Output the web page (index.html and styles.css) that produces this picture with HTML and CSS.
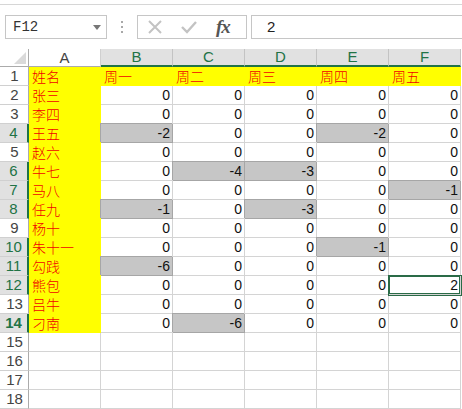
FILE: index.html
```html
<!DOCTYPE html>
<html lang="zh">
<head>
<meta charset="utf-8">
<title>Sheet</title>
<link rel="stylesheet" href="styles.css">
</head>
<body>
<div class="app">
  <div class="topline"></div>
  <div class="fbar">
    <div class="namebox"><span class="ref">F12</span><span class="drop"></span></div>
    <div class="dots"><i></i><i></i><i></i></div>
    <div class="btns">
      <svg class="ico x" width="16" height="16" viewBox="0 0 16 16"><path d="M2 2L14 14M14 2L2 14" stroke="#c3c3c3" stroke-width="2" fill="none"/></svg>
      <svg class="ico v" width="18" height="16" viewBox="0 0 18 16"><path d="M2 8L7 13L16 3" stroke="#c3c3c3" stroke-width="2.4" fill="none"/></svg>
      <span class="fx">fx</span>
    </div>
    <div class="finput">2</div>
  </div>
  <div class="sheet">
    <div class="corner"><span class="tri"></span></div>
    <div class="ch">A</div><div class="ch hl">B</div><div class="ch hl">C</div><div class="ch hl">D</div><div class="ch hl">E</div><div class="ch hl">F</div>

    <div class="rh">1</div><div class="c y t">姓名</div><div class="c y t">周一</div><div class="c y t">周二</div><div class="c y t">周三</div><div class="c y t">周四</div><div class="c y t">周五</div>
    <div class="rh">2</div><div class="c y t">张三</div><div class="c n">0</div><div class="c n">0</div><div class="c n">0</div><div class="c n">0</div><div class="c n">0</div>
    <div class="rh">3</div><div class="c y t">李四</div><div class="c n">0</div><div class="c n">0</div><div class="c n">0</div><div class="c n">0</div><div class="c n">0</div>
    <div class="rh hl">4</div><div class="c y t">王五</div><div class="c n g">-2</div><div class="c n">0</div><div class="c n">0</div><div class="c n g">-2</div><div class="c n">0</div>
    <div class="rh">5</div><div class="c y t">赵六</div><div class="c n">0</div><div class="c n">0</div><div class="c n">0</div><div class="c n">0</div><div class="c n">0</div>
    <div class="rh hl">6</div><div class="c y t">牛七</div><div class="c n">0</div><div class="c n g">-4</div><div class="c n g">-3</div><div class="c n">0</div><div class="c n">0</div>
    <div class="rh hl">7</div><div class="c y t">马八</div><div class="c n">0</div><div class="c n">0</div><div class="c n">0</div><div class="c n">0</div><div class="c n g">-1</div>
    <div class="rh hl">8</div><div class="c y t">任九</div><div class="c n g">-1</div><div class="c n">0</div><div class="c n g">-3</div><div class="c n">0</div><div class="c n">0</div>
    <div class="rh">9</div><div class="c y t">杨十</div><div class="c n">0</div><div class="c n">0</div><div class="c n">0</div><div class="c n">0</div><div class="c n">0</div>
    <div class="rh hl">10</div><div class="c y t">朱十一</div><div class="c n">0</div><div class="c n">0</div><div class="c n">0</div><div class="c n g">-1</div><div class="c n">0</div>
    <div class="rh hl">11</div><div class="c y t">勾践</div><div class="c n g">-6</div><div class="c n">0</div><div class="c n">0</div><div class="c n">0</div><div class="c n">0</div>
    <div class="rh hl">12</div><div class="c y t">熊包</div><div class="c n">0</div><div class="c n">0</div><div class="c n">0</div><div class="c n">0</div><div class="c n act">2</div>
    <div class="rh">13</div><div class="c y t">吕牛</div><div class="c n">0</div><div class="c n">0</div><div class="c n">0</div><div class="c n">0</div><div class="c n">0</div>
    <div class="rh hl b">14</div><div class="c y t">刁南</div><div class="c n">0</div><div class="c n g">-6</div><div class="c n">0</div><div class="c n">0</div><div class="c n">0</div>
    <div class="rh">15</div><div class="c"></div><div class="c"></div><div class="c"></div><div class="c"></div><div class="c"></div><div class="c"></div>
    <div class="rh">16</div><div class="c"></div><div class="c"></div><div class="c"></div><div class="c"></div><div class="c"></div><div class="c"></div>
    <div class="rh">17</div><div class="c"></div><div class="c"></div><div class="c"></div><div class="c"></div><div class="c"></div><div class="c"></div>
    <div class="rh">18</div><div class="c"></div><div class="c"></div><div class="c"></div><div class="c"></div><div class="c"></div><div class="c"></div>
  </div>
</div>
</body>
</html>
```

FILE: styles.css
```css
* { box-sizing: border-box; }
html, body { margin: 0; padding: 0; background: #ffffff; }
body { width: 462px; height: 409px; overflow: hidden; font-family: "Liberation Sans", Arial, sans-serif; }

.app { display: flex; flex-direction: column; }

.topline { height: 5px; border-bottom: 1px solid #d6d6d6; margin-top: 0; }

.fbar { display: flex; align-items: center; height: 24px; margin-top: 10px; padding-left: 5px; }
.namebox { width: 102px; height: 24px; border: 1px solid #c6c6c6; display: flex; align-items: center; justify-content: space-between; padding: 0 5px 0 7px; }
.ref { font-family: "Liberation Mono", "DejaVu Sans Mono", monospace; font-size: 14px; color: #333; }
.drop { width: 0; height: 0; border-left: 4px solid transparent; border-right: 4px solid transparent; border-top: 5px solid #777; }

.dots { width: 30px; display: flex; flex-direction: column; align-items: center; gap: 3px; }
.dots i { width: 2px; height: 2px; background: #a8a8a8; display: block; }

.btns { width: 110px; height: 24px; border: 1px solid #c6c6c6; display: flex; align-items: center; padding-left: 9px; }
.ico.x { margin-right: 17px; }
.ico.v { margin-right: 18px; }
.fx { font-family: "Liberation Serif", "DejaVu Serif", serif; font-style: italic; font-weight: bold; font-size: 19px; color: #555; letter-spacing: -1px; }

.finput { flex: 1; height: 24px; margin-left: 4px; border: 1px solid #c6c6c6; border-right: none; font-size: 15px; color: #222; padding-left: 15px; line-height: 22px; }

.sheet { display: grid; grid-template-columns: 29px repeat(6, 72px); grid-template-rows: 18px; grid-auto-rows: 19px; margin-top: 10px; }

.corner { border-right: 1px solid #ababab; border-bottom: 1px solid #ababab; position: relative; background: #fff; }
.tri { position: absolute; right: 2px; bottom: 2px; width: 0; height: 0; border-left: 12px solid transparent; border-bottom: 12px solid #dadada; }

.ch { border-right: 1px solid #d0d0d0; border-bottom: 1px solid #ababab; text-align: center; font-size: 15px; line-height: 17px; color: #444; background: #fff; }
.ch.hl { background: #e1e1e1; color: #217346; border-right-color: #c3c3c3; border-bottom: 2px solid #217346; line-height: 16px; }

.rh { border-right: 1px solid #ababab; border-bottom: 1px solid #d0d0d0; text-align: center; font-size: 15px; line-height: 18px; color: #444; background: #fff; padding-left: 1px; }
.rh.hl { background: #e1e1e1; color: #217346; border-right: 2px solid #217346; padding-left: 0; }
.rh.b { font-weight: bold; }

.c { border-right: 1px solid #d4d4d4; border-bottom: 1px solid #d4d4d4; font-size: 14px; line-height: 19px; color: #111; white-space: nowrap; overflow: visible; }
.c.n { text-align: right; padding-right: 2px; }
.c.t { font-family: "Noto Sans CJK SC", "Liberation Sans", sans-serif; font-weight: 300; color: #f00000; padding-left: 3px; line-height: 18px; font-size: 14px; }
.c.y { background: #ffff00; border-right-color: #ffff00; border-bottom-color: #ffff00; }
.c.g { background: #c6c6c6; border-right-color: #a6a6a6; border-bottom-color: #a6a6a6; box-shadow: -1px -1px 0 #a6a6a6; }
.c.act { box-shadow: inset 0 0 0 1px #2a6b47, 0 0 0 1px #2a6b47; position: relative; }
```
